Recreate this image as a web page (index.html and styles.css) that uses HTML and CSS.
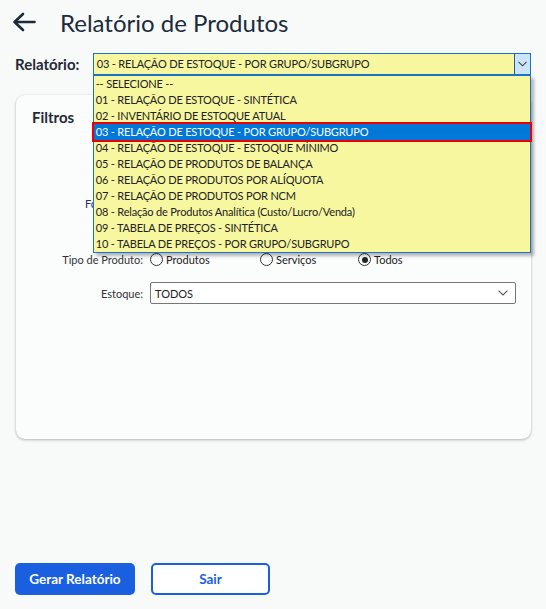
FILE: index.html
```html
<!DOCTYPE html>
<html lang="pt-BR">
<head>
<meta charset="utf-8">
<title>Relatório de Produtos</title>
<link rel="stylesheet" href="styles.css">
</head>
<body>
<div class="page">
  <header class="header">
    <svg class="back" width="24" height="20" viewBox="0 0 24 20" aria-hidden="true">
      <path d="M22.5 10H3 M11 2 L2.5 10 L11 18" fill="none" stroke="#1c2b3a" stroke-width="2.6" stroke-linecap="round" stroke-linejoin="round"/>
    </svg>
    <h1 class="title">Relatório de Produtos</h1>
  </header>

  <div class="report-row">
    <label class="report-label">Relatório:</label>
    <div class="combo">
      <div class="combo-box">
        <span class="combo-value">03 - RELAÇÃO DE ESTOQUE - POR GRUPO/SUBGRUPO</span>
        <span class="combo-btn">
          <svg width="9" height="6" viewBox="0 0 9 6"><path d="M0.5 0.8 L4.5 4.8 L8.5 0.8" fill="none" stroke="#444" stroke-width="1.1"/></svg>
        </span>
      </div>
      <ul class="combo-list">
        <li>-- SELECIONE --</li>
        <li>01 - RELAÇÃO DE ESTOQUE - SINTÉTICA</li>
        <li>02 - INVENTÁRIO DE ESTOQUE ATUAL</li>
        <li class="selected">03 - RELAÇÃO DE ESTOQUE - POR GRUPO/SUBGRUPO</li>
        <li>04 - RELAÇÃO DE ESTOQUE - ESTOQUE MÍNIMO</li>
        <li>05 - RELAÇÃO DE PRODUTOS DE BALANÇA</li>
        <li>06 - RELAÇÃO DE PRODUTOS POR ALÍQUOTA</li>
        <li>07 - RELAÇÃO DE PRODUTOS POR NCM</li>
        <li>08 - Relação de Produtos Analítica (Custo/Lucro/Venda)</li>
        <li>09 - TABELA DE PREÇOS - SINTÉTICA</li>
        <li>10 - TABELA DE PREÇOS - POR GRUPO/SUBGRUPO</li>
      </ul>
    </div>
  </div>

  <section class="card">
    <h2 class="card-title">Filtros</h2>
    <div class="filters">
      <div class="frow"></div>
      <div class="frow"></div>
      <div class="frow"><span class="flabel link">Fornecedor:</span></div>
      <div class="frow"></div>
      <div class="frow">
        <span class="flabel">Tipo de Produto:</span>
        <div class="radios">
          <label class="radio r1"><span class="dot"></span>Produtos</label>
          <label class="radio r2"><span class="dot"></span>Serviços</label>
          <label class="radio"><span class="dot on"></span>Todos</label>
        </div>
      </div>
      <div class="frow est">
        <span class="flabel">Estoque:</span>
        <div class="select">
          <span>TODOS</span>
          <svg width="10" height="6" viewBox="0 0 10 6"><path d="M0.5 0.7 L5 5 L9.5 0.7" fill="none" stroke="#555" stroke-width="1.1"/></svg>
        </div>
      </div>
    </div>
  </section>

  <footer class="actions">
    <button class="btn primary">Gerar Relatório</button>
    <button class="btn outline">Sair</button>
  </footer>
</div>
</body>
</html>
```

FILE: styles.css
```css
* { box-sizing: border-box; }
html, body { margin: 0; padding: 0; }
body {
  background: #f8fafa;
  font-family: Lato, "Open Sans", sans-serif;
  color: #222;
  width: 546px;
  height: 609px;
  overflow: hidden;
}
.page { padding: 0 15px 0 15px; }

.header {
  display: flex;
  align-items: center;
  height: 44px;
}
.back { margin-left: -3px; margin-right: 24px; }
.title {
  margin: 0;
  font-size: 24px;
  font-weight: 400;
  color: #1c2b3a;
}

.report-row {
  display: flex;
  align-items: center;
  margin-top: 9px;
  height: 22px;
}
.report-label {
  width: 78px;
  font-size: 15px;
  font-weight: 700;
  color: #1f2937;
}
.combo {
  position: relative;
  width: 440px;
  height: 22px;
}
.combo-box {
  display: flex;
  height: 22px;
  border: 1px solid #1a73c9;
  background: #f7f7a0;
}
.combo-value {
  flex: 1;
  font-size: 11px;
  line-height: 20px;
  padding-left: 3px;
  letter-spacing: -0.18px;
  white-space: nowrap;
  overflow: hidden;
}
.combo-btn {
  width: 16px;
  background: #cce4f7;
  border-left: 1px solid #1a5fa8;
  display: flex;
  align-items: center;
  justify-content: center;
}
.combo-list {
  position: absolute;
  left: 0;
  top: 22px;
  width: 438px;
  margin: 0;
  padding: 0;
  list-style: none;
  background: #f7f7a0;
  border: 1px solid #1a73c9;
  box-shadow: 3px 3px 3px rgba(0,0,0,0.28);
  z-index: 5;
}
.combo-list li {
  height: 16px;
  line-height: 16px;
  font-size: 11px;
  letter-spacing: -0.18px;
  padding-left: 2px;
  color: #222;
  white-space: nowrap;
}
.combo-list li.selected {
  background: #0078d7;
  color: #fff;
  outline: 2px solid #ee0000;
  position: relative;
}

.card {
  margin-top: 20px;
  margin-left: 1px;
  width: 515px;
  height: 344px;
  background: #fbfcfc;
  border-radius: 9px;
  box-shadow: 0 1px 3px rgba(0,0,0,0.28), 0 0 1px rgba(0,0,0,0.08);
  padding: 13px 0 0 16px;
}
.card-title {
  margin: 0;
  font-size: 15px;
  font-weight: 700;
  color: #1f2937;
  line-height: 18px;
}
.filters {
  margin-top: 11px;
  display: flex;
  flex-direction: column;
  gap: 7px;
}
.frow {
  display: flex;
  align-items: center;
  min-height: 21px;
}
.flabel {
  width: 111px;
  text-align: right;
  font-size: 11px;
  color: #333;
  margin-right: 7px;
  white-space: nowrap;
}
.flabel.link { color: #2b2a6e; }
.radios { display: flex; align-items: center; font-size: 11px; color: #222; }
.radio { display: flex; align-items: center; }
.radio.r1 { width: 110px; }
.radio.r2 { width: 98px; }
.dot {
  width: 13px;
  height: 13px;
  border: 1px solid #333;
  border-radius: 50%;
  background: #fff;
  margin-right: 3px;
  position: relative;
}
.dot.on::after {
  content: "";
  position: absolute;
  left: 2.5px;
  top: 2.5px;
  width: 6px;
  height: 6px;
  border-radius: 50%;
  background: #222;
}
.frow.est { margin-top: 5px; }
.select {
  width: 366px;
  height: 22px;
  border: 1px solid #767676;
  border-radius: 2px;
  background: #fff;
  display: flex;
  align-items: center;
  justify-content: space-between;
  padding: 0 7px 0 4px;
  font-size: 11px;
  color: #222;
}

.actions {
  display: flex;
  gap: 16px;
  margin-top: 124px;
}
.btn {
  height: 32px;
  border-radius: 5px;
  font-family: Lato, "Open Sans", sans-serif;
  font-size: 13.5px;
  font-weight: 700;
  cursor: pointer;
}
.btn.primary {
  width: 120px;
  background: #1a5fe0;
  color: #fff;
  border: none;
}
.btn.outline {
  width: 119px;
  background: #fff;
  color: #1a5fe0;
  border: 2px solid #1a5fe0;
}
```
